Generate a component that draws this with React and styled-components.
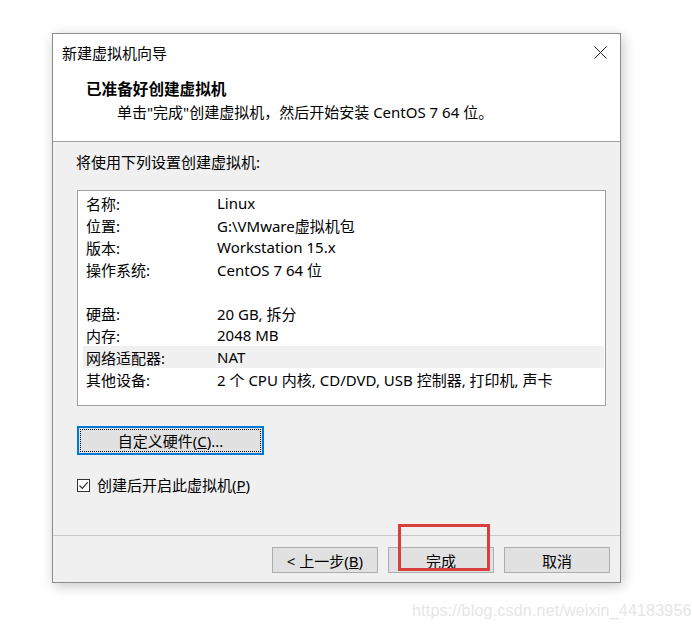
import React from "react";
import styled, { createGlobalStyle } from "styled-components";

const GlobalStyle = createGlobalStyle`
  body {
    margin: 0;
    background: #ffffff;
    font-family: "Noto Sans", "Noto Sans CJK SC", sans-serif;
    color: #000;
  }
`;

const Page = styled.div`
  width: 692px;
  height: 633px;
  padding: 33px 0 0 52px;
  box-sizing: border-box;
  overflow: hidden;
`;

const Window = styled.div`
  position: relative;
  width: 569px;
  height: 550px;
  box-sizing: border-box;
  border: 1px solid #8c8c8c;
  background: #f0f0f0;
  box-shadow: 2px 3px 12px rgba(0, 0, 0, 0.22);
  display: flex;
  flex-direction: column;
`;

const TitleBar = styled.div`
  height: 36px;
  background: #fff;
  display: flex;
  align-items: center;
  justify-content: space-between;
  padding: 0 13px 0 9px;
  font-size: 15px;
`;

const Close = styled.svg`
  width: 13px;
  height: 13px;
`;

const Header = styled.div`
  background: #fff;
  padding: 9px 0 19px 33px;
  border-bottom: 1px solid #a0a0a0;
`;

const Heading = styled.div`
  font-size: 15.6px;
  font-weight: 700;
  line-height: 20px;
`;

const Sub = styled.div`
  font-size: 15px;
  line-height: 20px;
  margin-top: 3px;
  padding-left: 31px;
`;

const Body = styled.div`
  flex: 1;
  padding: 10px 14px 0 23px;
  font-size: 15px;
`;

const Intro = styled.div`
  line-height: 20px;
`;

const List = styled.div`
  margin: 18px 0 0 1px;
  height: 216px;
  box-sizing: border-box;
  border: 1px solid #a0a0a0;
  background: #fff;
  padding: 1px 1px 0 5px;
`;

const Row = styled.div`
  display: flex;
  height: 22px;
  align-items: center;
  padding-left: 3px;
  background: ${(p) => (p.$active ? "#f0f0f0" : "transparent")};
`;

const Label = styled.span`
  width: 131px;
  flex: none;
`;

const HwButton = styled.button`
  margin: 20px 0 0 1px;
  width: 187px;
  height: 29px;
  border: 2px solid #0078d7;
  background: #e1e1e1;
  padding: 1px;
  font: inherit;
  font-size: 15px;
  display: block;
`;

const FocusRing = styled.span`
  display: flex;
  align-items: center;
  justify-content: center;
  height: 100%;
  box-sizing: border-box;
  border: 1px dotted #000;
`;

const Check = styled.label`
  margin: 22px 0 0 1px;
  display: flex;
  align-items: center;
  gap: 7px;
  line-height: 16px;
`;

const Box = styled.span`
  width: 13px;
  height: 13px;
  box-sizing: border-box;
  border: 1px solid #333;
  background: #fff;
  display: flex;
  align-items: center;
  justify-content: center;
`;

const Footer = styled.div`
  height: 47px;
  border-top: 1px solid #c8c8c8;
  display: flex;
  justify-content: flex-end;
  gap: 10px;
  padding: 11px 10px 0 0;
  box-sizing: border-box;
`;

const Button = styled.button`
  width: 106px;
  height: 26px;
  border: 1px solid #adadad;
  background: #e1e1e1;
  font: inherit;
  font-size: 15px;
  color: #000;
  padding: 0;
`;

const Mark = styled.div`
  position: absolute;
  left: 345px;
  top: 490px;
  width: 92px;
  height: 47px;
  box-sizing: border-box;
  border: 3px solid #d8403f;
`;

const Watermark = styled.div`
  margin-top: 19px;
  padding-left: 360px;
  font-family: "Liberation Sans", sans-serif;
  font-size: 16px;
  color: #e6e6e6;
  letter-spacing: 0.2px;
`;

const rows = [
  ["名称:", "Linux"],
  ["位置:", "G:\\VMware虚拟机包"],
  ["版本:", "Workstation 15.x"],
  ["操作系统:", "CentOS 7 64 位"],
  ["", ""],
  ["硬盘:", "20 GB, 拆分"],
  ["内存:", "2048 MB"],
  ["网络适配器:", "NAT", true],
  ["其他设备:", "2 个 CPU 内核, CD/DVD, USB 控制器, 打印机, 声卡"],
];

export default function App() {
  return (
    <Page>
      <GlobalStyle />
      <Window>
        <TitleBar>
          <span>新建虚拟机向导</span>
          <Close viewBox="0 0 13 13">
            <path d="M0.5 0.5 L12.5 12.5 M12.5 0.5 L0.5 12.5" stroke="#222" strokeWidth="1" />
          </Close>
        </TitleBar>
        <Header>
          <Heading>已准备好创建虚拟机</Heading>
          <Sub>单击"完成"创建虚拟机，然后开始安装 CentOS 7 64 位。</Sub>
        </Header>
        <Body>
          <Intro>将使用下列设置创建虚拟机:</Intro>
          <List>
            {rows.map(([k, v, active], i) => (
              <Row key={i} $active={active}>
                <Label>{k}</Label>
                <span>{v}</span>
              </Row>
            ))}
          </List>
          <HwButton>
            <FocusRing>
              自定义硬件(<u>C</u>)...
            </FocusRing>
          </HwButton>
          <Check>
            <Box>
              <svg width="11" height="11" viewBox="0 0 11 11">
                <path d="M1.5 5.5 L4.3 8.3 L9.8 2.2" fill="none" stroke="#333" strokeWidth="1.2" />
              </svg>
            </Box>
            <span>
              创建后开启此虚拟机(<u>P</u>)
            </span>
          </Check>
        </Body>
        <Footer>
          <Button>
            &lt; 上一步(<u>B</u>)
          </Button>
          <Button>完成</Button>
          <Button>取消</Button>
        </Footer>
        <Mark />
      </Window>
      <Watermark>https://blog.csdn.net/weixin_44183956</Watermark>
    </Page>
  );
}
